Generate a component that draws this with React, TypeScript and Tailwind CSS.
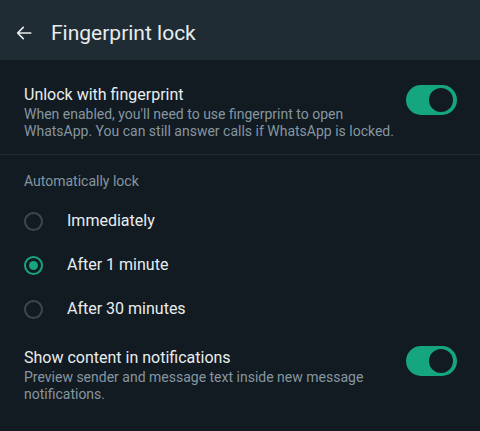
import React, { useState } from 'react';

const Toggle = ({ on, setOn }: { on: boolean; setOn: (v: boolean) => void }) => (
    <button
        type='button'
        onClick={() => setOn(!on)}
        className={`flex items-center shrink-0 w-[51px] h-[30px] rounded-full px-[4px] ${on ? 'bg-[#15a57f] justify-end' : 'bg-[#3b4a54] justify-start'}`}
    >
        <span className='block w-[24px] h-[24px] rounded-full bg-[#121b22]' />
    </button>
);

const Radio = ({ label, checked, onClick }: { label: string; checked: boolean; onClick: () => void }) => (
    <button type='button' onClick={onClick} className='flex items-center h-[44px] w-full text-left'>
        <span className={`flex items-center justify-center ml-[24px] w-[19px] h-[19px] rounded-full border-2 ${checked ? 'border-[#15a57f]' : 'border-[#3b4751]'}`}>
            {checked && <span className='block w-[9px] h-[9px] rounded-full bg-[#15a57f]' />}
        </span>
        <span className='ml-[24px] text-[16px] leading-[20px] text-[#e9edef]'>{label}</span>
    </button>
);

const App = () => {
    const [unlock, setUnlock] = useState(true);
    const [showContent, setShowContent] = useState(true);
    const [lockAfter, setLockAfter] = useState('1');

    return (
        <div className="w-[480px] h-[431px] bg-[#121b22] overflow-hidden" style={{ fontFamily: 'Roboto, "Noto Sans", sans-serif' }}>
            <div className='flex items-center h-[60px] bg-[#1f2c34] pt-[6px]'>
                <svg className='ml-[15px]' width="18" height="18" viewBox="0 0 24 24" fill="none" stroke="#e9edef" strokeWidth="2.2" strokeLinecap="round" strokeLinejoin="round">
                    <path d="M21 12H3.5M11 4.5L3.5 12l7.5 7.5" />
                </svg>
                <span className='ml-[18px] text-[21px] leading-[24px] text-[#e9edef]'>Fingerprint lock</span>
            </div>

            <div className='flex items-start px-[24px] pt-[25px] pb-[14px] border-b border-[#1f2a31]'>
                <div className='flex-1 min-w-0'>
                    <div className='text-[16px] leading-[20px] text-[#e9edef]'>Unlock with fingerprint</div>
                    <div className='mt-[1px] text-[14px] leading-[17px] text-[#8696a0]'>
                        When enabled, you'll need to use fingerprint to open WhatsApp. You can still answer calls if WhatsApp is locked.
                    </div>
                </div>
                <div className='ml-[2px] -mr-[1px]'>
                    <Toggle on={unlock} setOn={setUnlock} />
                </div>
            </div>

            <div className='px-[24px] pt-[17px] text-[14px] leading-[18px] text-[#8696a0]'>Automatically lock</div>
            <div className='mt-[9px]'>
                <Radio label='Immediately' checked={lockAfter === '0'} onClick={() => setLockAfter('0')} />
                <Radio label='After 1 minute' checked={lockAfter === '1'} onClick={() => setLockAfter('1')} />
                <Radio label='After 30 minutes' checked={lockAfter === '30'} onClick={() => setLockAfter('30')} />
            </div>

            <div className='flex items-start px-[24px] pt-[17px]'>
                <div className='flex-1 min-w-0'>
                    <div className='text-[16px] leading-[20px] text-[#e9edef]'>Show content in notifications</div>
                    <div className='mt-[1px] text-[14px] leading-[17px] text-[#8696a0] pr-[20px]'>
                        Preview sender and message text inside new message notifications.
                    </div>
                </div>
                <div className='ml-[2px] -mr-[1px] -mt-[2px]'>
                    <Toggle on={showContent} setOn={setShowContent} />
                </div>
            </div>
        </div>
    );
};

export default App;
